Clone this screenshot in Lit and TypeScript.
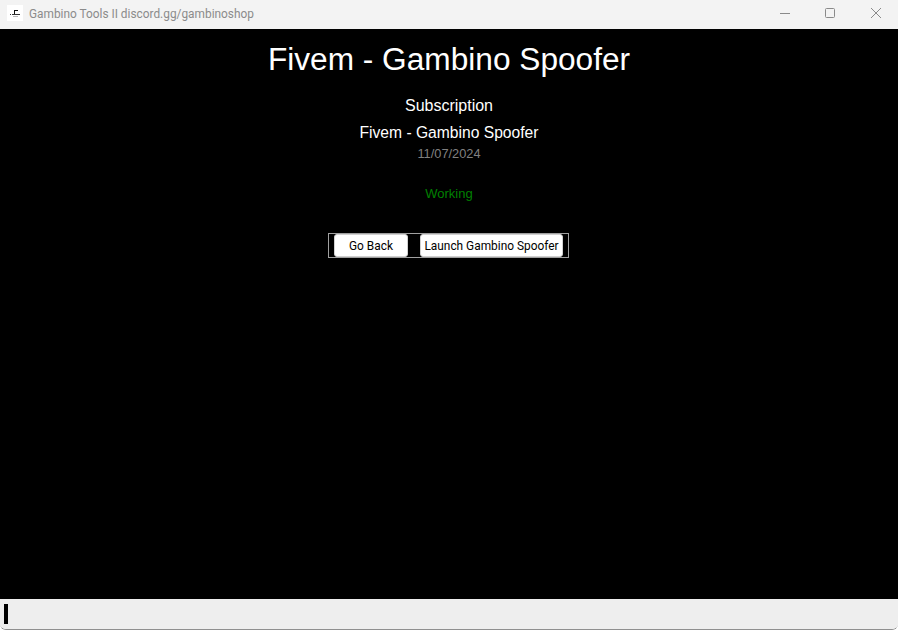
import { LitElement, html, css } from "lit";
import { customElement } from "lit/decorators.js";

@customElement("app-root")
export class AppRoot extends LitElement {
  static styles = css`
    :host { display: block; width: 898px; height: 631px; background: #fff; overflow: hidden; font-family: "Liberation Sans", Arial, sans-serif; }
    .window { display: flex; flex-direction: column; border-bottom: 1px solid #8f8f8f; height: 629px; border-radius: 0 0 6px 6px; overflow: hidden; }
    .titlebar { height: 29px; flex: none; background: #f3f3f3; display: flex; align-items: center; }
    .logo { width: 16px; height: 16px; margin-left: 7px; margin-top: -3px; background: #fff; flex: none; display: block; }
    .wintitle { margin-left: 6px; font: 11.87px Roboto, sans-serif; color: #8b8b8b; margin-top: -1px; white-space: nowrap; }
    .controls { margin-left: auto; display: flex; align-items: flex-start; align-self: flex-start; }
    .ctl { height: 26px; display: flex; align-items: center; justify-content: center; }
    .min { width: 45px; }
    .max { width: 46px; margin-right: 1px; }
    .close { width: 44px; }
    .ctl svg { display: block; width: 12px; height: 12px; fill: none; stroke: #8a8a8a; stroke-width: 1; }
    .main { flex: 1; background: #000; display: flex; flex-direction: column; align-items: center; color: #fff; text-align: center; }
    h1 { margin: 12px 0 0; font-size: 31.65px; line-height: 37px; font-weight: 400; }
    .sub { margin-top: 19px; font-size: 16px; line-height: 18px; }
    .name { margin-top: 9px; font-size: 15.65px; line-height: 18px; }
    .date { margin-top: 5px; font-size: 12.8px; line-height: 14px; color: #808080; }
    .status { margin-top: 25px; font-size: 13px; line-height: 16px; color: #008000; }
    .actions { margin-top: 31px; margin-right: 1px; width: 241px; height: 25px; box-sizing: border-box; border: 1px solid #a0a0a0; display: flex; align-items: center; padding: 0 5px; justify-content: space-between; }
    button { height: 23px; margin: 0; padding: 0; box-sizing: border-box; border: 1px solid #d0d0d0; border-radius: 3px; background: #fff; color: #000; font: 11.9px Roboto, sans-serif; white-space: nowrap; }
    .back { width: 74px; }
    .launch { width: 143px; }
    .statusbar { height: 30px; flex: none; background: #eeeeee; display: flex; align-items: center; padding-left: 4px; }
    .caret { width: 4px; height: 20px; background: #000; }
  `;

  render() {
    return html`
      <div class="window">
        <div class="titlebar">
          <svg class="logo" viewBox="0 0 16 16">
            <path d="M7 5h4v1H8v3H7z" fill="#111"/>
            <path d="M3 9h1v1H3zM5 9h7v1H5zM12 9h1v1h-1z" fill="#333"/>
            <path d="M6 11h5v1H6z" fill="#bbb"/>
          </svg>
          <span class="wintitle">Gambino Tools II discord.gg/gambinoshop</span>
          <div class="controls">
            <div class="ctl min"><svg viewBox="0 0 12 12"><path d="M1 6.5h10"/></svg></div>
            <div class="ctl max"><svg viewBox="0 0 12 12"><rect x="1.5" y="1.5" width="9" height="9" rx="1"/></svg></div>
            <div class="ctl close"><svg viewBox="0 0 12 12"><path d="M1 1l10 10M11 1L1 11"/></svg></div>
          </div>
        </div>
        <div class="main">
          <h1>Fivem - Gambino Spoofer</h1>
          <div class="sub">Subscription</div>
          <div class="name">Fivem - Gambino Spoofer</div>
          <div class="date">11/07/2024</div>
          <div class="status">Working</div>
          <div class="actions">
            <button class="back">Go Back</button>
            <button class="launch">Launch Gambino Spoofer</button>
          </div>
        </div>
        <div class="statusbar"><div class="caret"></div></div>
      </div>
    `;
  }
}
